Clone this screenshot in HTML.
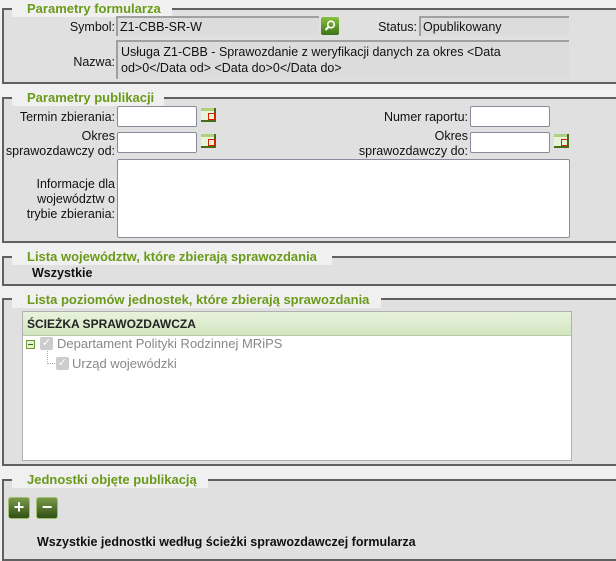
<!DOCTYPE html><html><head><meta charset="utf-8"><style>
*{box-sizing:border-box}
body{margin:0;width:616px;height:561px;background:#f0f0f0;font-family:"Liberation Sans",sans-serif;font-size:12.5px;color:#111;position:relative;overflow:hidden}
.fs{position:absolute;left:2px;width:630px;border:2px solid #606060;border-right:none;background:#e0e0e0}
.lg{position:absolute;background:#f0f0f0;color:#6a9a1a;font-weight:bold;font-size:13px;padding:0 0 0 15px;height:17px;line-height:17px;white-space:nowrap;overflow:hidden}
.a{position:absolute;white-space:nowrap}
.r{text-align:right}
.ro{position:absolute;background:#dcdcdc;border-top:2px solid #a0a0a0;border-left:2px solid #a0a0a0;padding:1px 2px;font-size:12.5px;line-height:16px}
.in{position:absolute;background:#fff;border:1px solid #8a8a9a;border-radius:2px}
.cal{position:absolute;width:15px;height:14px;background:#e8f4d8;border-right:2px solid #4a6a1a;border-bottom:2px solid #4a6a1a;background-image:linear-gradient(#b0d080 3px,transparent 3px)}
.cal:after{content:"";position:absolute;left:7px;top:5px;width:5px;height:5px;border:1px solid #d02000}
.btn{position:absolute;width:22px;height:22px;border-radius:3px;background:linear-gradient(#7a9a4a,#2f4f14);border:1px solid #a0c070;color:#fff;font-weight:bold;font-size:18px;line-height:19px;text-align:center}
</style></head><body>
<div class="fs" style="top:8px;height:76px"></div>
<div class="lg" style="left:12px;top:0;width:160px">Parametry formularza</div>
<div class="a r" style="right:501px;top:20px">Symbol:</div>
<div class="ro" style="left:116px;top:16px;width:203px;height:20px">Z1-CBB-SR-W</div>
<div style="position:absolute;left:321px;top:17px;width:18px;height:18px;border-radius:2px;background:linear-gradient(#8ac040,#3e7418)"><svg width="18" height="18"><circle cx="10" cy="7.5" r="3.3" fill="none" stroke="#fff" stroke-width="1.6"/><path d="M7.5 10 L4.5 13" stroke="#fff" stroke-width="2"/></svg></div>
<div class="a r" style="right:199px;top:20px">Status:</div>
<div class="ro" style="left:419px;top:16px;width:150px;height:20px">Opublikowany</div>
<div class="a r" style="right:501px;top:55px">Nazwa:</div>
<div class="ro" style="left:116px;top:40px;width:453px;height:39px;padding:2px 3px;line-height:16px;white-space:normal">Usługa Z1-CBB - Sprawozdanie z weryfikacji danych za okres &lt;Data od&gt;0&lt;/Data od&gt; &lt;Data do&gt;0&lt;/Data do&gt;</div>

<div class="fs" style="top:97px;height:146px"></div>
<div class="lg" style="left:12px;top:89px;width:152px">Parametry publikacji</div>
<div class="a r" style="right:501px;top:110px">Termin zbierania:</div>
<div class="in" style="left:117px;top:106px;width:80px;height:21px"></div>
<div class="cal" style="left:201px;top:108px"></div>
<div class="a r" style="right:148px;top:110px">Numer raportu:</div>
<div class="in" style="left:470px;top:106px;width:80px;height:21px"></div>
<div class="a r" style="right:501px;top:129px;line-height:15px">Okres<br>sprawozdawczy od:</div>
<div class="in" style="left:117px;top:132px;width:80px;height:21px"></div>
<div class="cal" style="left:201px;top:134px"></div>
<div class="a r" style="right:148px;top:129px;line-height:15px">Okres<br>sprawozdawczy do:</div>
<div class="in" style="left:470px;top:132px;width:80px;height:21px"></div>
<div class="cal" style="left:554px;top:134px"></div>
<div class="a r" style="right:501px;top:177px;line-height:15px">Informacje dla<br>województw o<br>trybie zbierania:</div>
<div class="in" style="left:117px;top:159px;width:453px;height:79px"></div>

<div class="fs" style="top:256px;height:30px"></div>
<div class="lg" style="left:12px;top:248px;width:320px">Lista województw, które zbierają sprawozdania</div>
<div class="a" style="left:32px;top:266px;font-weight:bold">Wszystkie</div>

<div class="fs" style="top:298px;height:168px"></div>
<div class="lg" style="left:12px;top:291px;width:369px">Lista poziomów jednostek, które zbierają sprawozdania</div>
<div style="position:absolute;left:22px;top:311px;width:550px;height:150px;background:#fff;border:1px solid #b0b0b0"></div>
<div style="position:absolute;left:23px;top:312px;width:548px;height:24px;background:linear-gradient(#e8f2de,#d2e6c0);border-bottom:1px solid #b8c8a8"></div>
<div class="a" style="left:27px;top:317px;font-weight:bold;font-size:12px;color:#222">ŚCIEŻKA SPRAWOZDAWCZA</div>
<div style="position:absolute;left:26px;top:340px;width:9px;height:9px;border:1px solid #6a9a2a;background:#e8f0d8"></div>
<div style="position:absolute;left:28px;top:344px;width:5px;height:1px;background:#3a6a0a"></div>
<div style="position:absolute;left:40px;top:337px;width:13px;height:13px;background:#ccc;border-radius:2px;color:#fff;font-size:11px;line-height:13px;text-align:center">✓</div>
<div class="a" style="left:57px;top:336px;color:#888;font-size:13px">Departament Polityki Rodzinnej MRiPS</div>
<div style="position:absolute;left:47px;top:351px;width:8px;height:13px;border-left:1px dotted #aaa;border-bottom:1px dotted #aaa"></div>
<div style="position:absolute;left:56px;top:357px;width:13px;height:13px;background:#ccc;border-radius:2px;color:#fff;font-size:11px;line-height:13px;text-align:center">✓</div>
<div class="a" style="left:72px;top:356px;color:#888;font-size:13px">Urząd wojewódzki</div>

<div class="fs" style="top:479px;height:82px"></div>
<div class="lg" style="left:12px;top:471px;width:196px">Jednostki objęte publikacją</div>
<div class="btn" style="left:8px;top:497px">+</div>
<div class="btn" style="left:36px;top:497px">−</div>
<div class="a" style="left:37px;top:535px;font-weight:bold">Wszystkie jednostki według ścieżki sprawozdawczej formularza</div>
</body></html>
